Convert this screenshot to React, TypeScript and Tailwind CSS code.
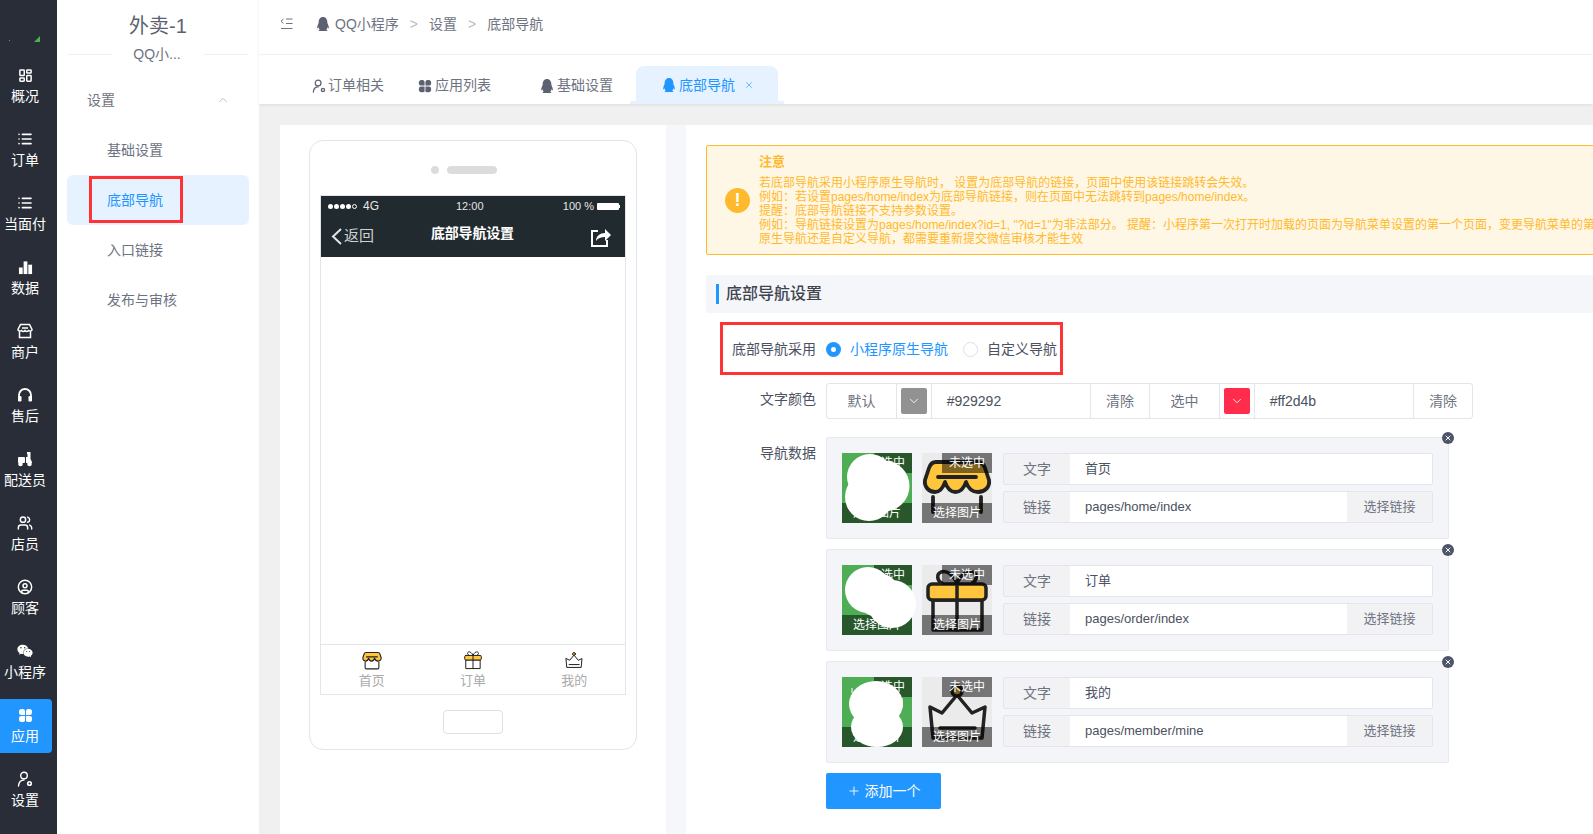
import { ChevronDown, ChevronUp, Plus, X, LayoutDashboard, List, CircleUser, Users } from "lucide-react";
import { FaQq, FaWeixin } from "react-icons/fa";
import type { ReactNode } from "react";

function Clover({ className = "" }: { className?: string }) {
  return (
    <svg viewBox="0 0 16 16" className={className} fill="currentColor">
      <path d="M4 1h1.500A2.500 2.500 0 0 1 7.500 3.500v4H3.500A2.500 2.500 0 0 1 1 5V4a3 3 0 0 1 3-3z" />
      <path d="M12 1h-1.500A2.500 2.500 0 0 0 8.500 3.500v4h4A2.500 2.500 0 0 0 15 5V4a3 3 0 0 0-3-3z" />
      <path d="M4 15h1.500a2 2 0 0 0 2-2.500v-4h-4A2.500 2.500 0 0 0 1 11v1a3 3 0 0 0 3 3z" />
      <path d="M12 15h-1.500a2 2 0 0 1-2-2.500v-4h4A2.500 2.500 0 0 1 15 11v1a3 3 0 0 1-3 3z" />
    </svg>
  );
}

function PersonGear({ className = "" }: { className?: string }) {
  return (
    <svg viewBox="0 0 16 16" className={className} fill="none" stroke="currentColor" strokeWidth="1.400">
      <circle cx="7" cy="4.500" r="3.300" />
      <path d="M1.500 15c.3-3.500 2.500-6 5.500-6" strokeLinecap="round" />
      <circle cx="12.500" cy="12.500" r="1.800" strokeWidth="1.600" />
    </svg>
  );
}

function Bars({ className = "" }: { className?: string }) {
  return (
    <svg viewBox="0 0 16 16" className={className} fill="currentColor">
      <rect x="1" y="8" width="4" height="7" />
      <rect x="6" y="1.500" width="4" height="13.500" />
      <rect x="11" y="5" width="4" height="10" />
    </svg>
  );
}

function Shop({ className = "" }: { className?: string }) {
  return (
    <svg viewBox="0 0 16 16" className={className} fill="none" stroke="currentColor" strokeWidth="1.500">
      <path d="M3.500 1.500h9L15 6.500c0 1.500-2 2.200-3.500 1-1 1.200-2.500 1.200-3.500 0-1 1.200-2.500 1.200-3.500 0C3 8.700 1 8 1 6.500z" />
      <path d="M2.500 9v5.500h11V9M5 5h6" />
    </svg>
  );
}

function Headset({ className = "" }: { className?: string }) {
  return (
    <svg viewBox="0 0 16 16" className={className} fill="none" stroke="currentColor" strokeWidth="1.800">
      <path d="M2 10V8a6 6 0 0 1 12 0v2" />
      <rect x="1" y="9" width="3.500" height="5.500" rx="1.200" fill="currentColor" stroke="none" />
      <rect x="11.500" y="9" width="3.500" height="5.500" rx="1.200" fill="currentColor" stroke="none" />
    </svg>
  );
}

function Scooter({ className = "" }: { className?: string }) {
  return (
    <svg viewBox="0 0 16 16" className={className} fill="currentColor">
      <rect x="1" y="6" width="7" height="6" rx="1" />
      <path d="M10 1h3.500v7l1.500 3v1H9V6h1.500V3H10z" />
      <circle cx="3.500" cy="13" r="2.300" />
      <circle cx="12.500" cy="13" r="2.300" />
    </svg>
  );
}

function FoldIcon() {
  return (
    <svg viewBox="0 0 14 14" className="h-[14px] w-[14px]" fill="none" stroke="#6b7280" strokeWidth="1">
      <path d="M3.500 2 1 4.200l2.500 2.200M6 2h6.500M6 6.500h6.500M1 11.500h11.500" />
    </svg>
  );
}

// the yellow tab icons, drawn on a 70 unit box so the same art works at 20px and 70px
function StoreArt({ size, closed = false }: { size: number; closed?: boolean }) {
  return (
    <svg viewBox="0 0 70 70" width={size} height={size} fill="none" stroke="#222" strokeWidth="3.800" strokeLinejoin="round" strokeLinecap="round">
      <path d="M14 9H56C60 9 62 12 63 15L67 27C68 34 63 39 56 39C50 39 46 35 44 29C42 35 39 39 33.500 39C28 39 25 35 23 29C21 35 18 39 13 39C7 39 2 34 3 27L7 15C8 12 10 9 14 9Z" fill="#ffc53d" />
      <path d="M16 24h38" />
      {closed ? <path d="M11 42V62Q11 66 15 66H55Q59 66 59 62V42" /> : <path d="M11 44v15M59 44v15" />}
    </svg>
  );
}

function GiftArt({ size }: { size: number }) {
  return (
    <svg viewBox="0 0 70 70" width={size} height={size} fill="none" stroke="#222" strokeWidth="3.500" strokeLinejoin="round" strokeLinecap="round">
      <path d="M35 18c-4-8-10-13-16-11-5 2-4 9 1 11M35 18c4-8 10-13 16-11 5 2 4 9-1 11" />
      <path d="M11 35h49v30H11z" />
      <rect x="6" y="19" width="58" height="16" rx="4" fill="#ffc53d" />
      <path d="M35 19v46" />
    </svg>
  );
}

function CrownArt({ size }: { size: number }) {
  return (
    <svg viewBox="0 0 70 70" width={size} height={size} fill="none" stroke="#222" strokeWidth="3.500" strokeLinejoin="round" strokeLinecap="round">
      <path d="M8 30 20 36 35 18l15 18 13-6-3 31H11z" />
      <path d="M18 51h35" />
      <circle cx="35" cy="14" r="5" fill="#ffc53d" />
    </svg>
  );
}

// white patches that were painted over the green thumbnails
function Patch({ children }: { children: ReactNode }) {
  return (
    <svg viewBox="0 0 70 70" className="absolute top-0 left-0 h-[70px] w-[70px] overflow-visible" fill="#fff">
      {children}
    </svg>
  );
}

const railItems = [
  { label: "概况", icon: <LayoutDashboard className="h-[15px] w-[15px]" strokeWidth={2.400} /> },
  { label: "订单", icon: <List className="h-[16px] w-[16px]" strokeWidth={2.400} /> },
  { label: "当面付", icon: <List className="h-[16px] w-[16px]" strokeWidth={2.400} /> },
  { label: "数据", icon: <Bars className="h-[15px] w-[15px]" /> },
  { label: "商户", icon: <Shop className="h-[16px] w-[16px]" /> },
  { label: "售后", icon: <Headset className="h-[16px] w-[16px]" /> },
  { label: "配送员", icon: <Scooter className="h-[16px] w-[16px]" /> },
  { label: "店员", icon: <Users className="h-[16px] w-[16px]" strokeWidth={2.200} /> },
  { label: "顾客", icon: <CircleUser className="h-[16px] w-[16px]" strokeWidth={2.200} /> },
  { label: "小程序", icon: <FaWeixin className="h-[16px] w-[16px]" /> },
  { label: "应用", icon: <Clover className="h-[15px] w-[15px]" />, active: true },
  { label: "设置", icon: <PersonGear className="h-[16px] w-[16px]" /> },
];

const navRows = [
  {
    text: "首页",
    link: "pages/home/index",
    art: <StoreArt size={70} />,
    patch: (
      <Patch>
        <circle cx="28" cy="24" r="23" />
        <circle cx="27" cy="44" r="24" />
        <circle cx="42" cy="33" r="25.500" />
      </Patch>
    ),
  },
  {
    text: "订单",
    link: "pages/order/index",
    art: <GiftArt size={70} />,
    patch: (
      <Patch>
        <circle cx="26" cy="25" r="23" />
        <circle cx="50" cy="39" r="24" />
        <circle cx="36" cy="30" r="22" />
      </Patch>
    ),
  },
  {
    text: "我的",
    link: "pages/member/mine",
    art: <CrownArt size={70} />,
    patch: (
      <Patch>
        <ellipse cx="34" cy="27" rx="27" ry="23" />
        <ellipse cx="35" cy="50" rx="26" ry="20" />
        <path d="M10 11v5M60 21v10" stroke="#fff" strokeWidth="1" fill="none" />
      </Patch>
    ),
  },
];

function Rail() {
  return (
    <aside className="flex w-[57px] shrink-0 flex-col bg-[#282d38] text-white">
      <div className="relative h-[54px]">
        <span className="absolute top-[40px] left-[9px] h-px w-px bg-[#4caf50]" />
        <span className="absolute top-[36px] left-[34px] h-0 w-0 border-b-[6px] border-l-[6px] border-b-[#4caf50] border-l-transparent" />
      </div>
      {railItems.map((item) => (
        <div key={item.label} className="flex h-[64px] items-center">
          <div
            className={`flex h-[54px] w-[52px] flex-col items-center justify-center rounded-r-[4px] pr-[2px] ${
              item.active ? "bg-[#2196ff]" : ""
            }`}
          >
            <span className="flex h-[18px] items-center">{item.icon}</span>
            <span className="mt-[2px] text-[14px] leading-[20px] whitespace-nowrap">{item.label}</span>
          </div>
        </div>
      ))}
    </aside>
  );
}

function SubMenu() {
  return (
    <aside className="w-[202px] shrink-0 bg-white text-[14px] text-[#6e7382]">
      <div className="pt-[12px] text-center text-[20px] leading-[28px] text-[#5c6270]">外卖-1</div>
      <div className="mx-[10px] mt-[4px] flex h-[20px] items-center">
        <span className="h-px flex-1 bg-[#f1f1f3]" />
        <span className="w-[90px] pr-[2px] text-center leading-[20px]">QQ小...</span>
        <span className="h-px flex-1 bg-[#f1f1f3]" />
      </div>
      <div className="mt-[21px] flex h-[30px] items-center justify-between pr-[29px] pl-[30px]">
        <span>设置</span>
        <ChevronUp className="h-[14px] w-[14px] text-[#9aa0ac]" strokeWidth={1.200} />
      </div>
      <ul className="mx-[10px] mt-[10px]">
        <li className="flex h-[50px] items-center pl-[40px]">基础设置</li>
        <li className="relative flex h-[50px] items-center rounded-[6px] bg-[#e6f2ff] pl-[40px] text-[#2196ff]">
          底部导航
          <span className="absolute top-[1px] left-[22px] h-[47px] w-[94px] border-[3px] border-[#ff3333]" />
        </li>
        <li className="flex h-[50px] items-center pl-[40px]">入口链接</li>
        <li className="flex h-[50px] items-center pl-[40px]">发布与审核</li>
      </ul>
    </aside>
  );
}

function TopBars() {
  return (
    <div className="relative z-10 bg-white text-[14px] text-[#6e7382] shadow-[0_1px_3px_rgba(0,0,0,0.08)]">
      <div className="flex h-[55px] items-center border-b border-[#f2f2f4] pb-[6px] pl-[21px]">
        <FoldIcon />
        <FaQq className="ml-[22px] h-[14px] w-[14px] text-[#5c6270]" />
        <span className="ml-[5px]">QQ小程序</span>
        <span className="mx-[11px] text-[#b9bcc6]">&gt;</span>
        <span>设置</span>
        <span className="mx-[11px] text-[#b9bcc6]">&gt;</span>
        <span>底部导航</span>
      </div>
      <div className="flex h-[49px] items-end">
        <div className="mb-[8px] ml-[53px] flex items-center gap-[2px]">
          <PersonGear className="h-[14px] w-[14px] text-[#5c6270]" />
          <span>订单相关</span>
        </div>
        <div className="mb-[8px] ml-[34px] flex items-center gap-[3px]">
          <Clover className="h-[14px] w-[14px] text-[#5c6270]" />
          <span>应用列表</span>
        </div>
        <div className="mb-[8px] ml-[49px] flex items-center gap-[3px]">
          <FaQq className="h-[14px] w-[14px] text-[#5c6270]" />
          <span>基础设置</span>
        </div>
        <div className="relative ml-[23px] flex h-[38px] w-[142px] items-center rounded-t-[8px] bg-[#e6f2ff] pl-[26px] text-[#2196ff]">
          <span className="absolute bottom-0 -left-[6px] h-[3px] w-[6px] bg-[#e6f2ff]" />
          <span className="absolute -right-[6px] bottom-0 h-[3px] w-[6px] bg-[#e6f2ff]" />
          <FaQq className="h-[14px] w-[14px]" />
          <span className="ml-[3px]">底部导航</span>
          <X className="ml-[9px] h-[10px] w-[10px]" strokeWidth={1.500} />
        </div>
      </div>
    </div>
  );
}

function PhonePreview() {
  return (
    <section className="w-[386px] shrink-0 bg-white pt-[15px] pl-[29px]">
      <div className="flex h-[610px] w-[328px] flex-col items-center rounded-[14px] border border-[#e3e4ec]">
        <div className="mt-[25px] mr-[18px] flex h-[8px] items-center gap-[8px]">
          <span className="h-[8px] w-[8px] rounded-full bg-[#dcdcdc]" />
          <span className="h-[8px] w-[50px] rounded-full bg-[#dcdcdc]" />
        </div>
        <div className="mt-[21px] flex h-[500px] w-[306px] flex-col border border-[#e3e4ec]">
          <div className="h-[61px] bg-[#212a2e] text-white">
            <div className="relative flex h-[20px] items-center justify-between pr-[5px] pl-[7px] text-[11px] text-[#e5e5e5]">
              <span className="flex items-center gap-[1px]">
                <span className="h-[5px] w-[5px] rounded-full bg-white" />
                <span className="h-[5px] w-[5px] rounded-full bg-white" />
                <span className="h-[5px] w-[5px] rounded-full bg-white" />
                <span className="h-[5px] w-[5px] rounded-full bg-white" />
                <span className="h-[5px] w-[5px] rounded-full border border-white" />
                <span className="ml-[5px] text-[12px]">4G</span>
              </span>
              <span className="absolute left-[135px]">12:00</span>
              <span className="flex items-center gap-[3px]">
                100 %
                <span className="h-[7px] w-[22px] rounded-[1px] bg-white" />
                <span className="-ml-[3px] h-[3px] w-[1px] bg-white" />
              </span>
            </div>
            <div className="relative flex h-[41px] items-center justify-between pr-[13px] pl-[10px]">
              <span className="flex items-center text-[15px] text-[#cfd2d3]">
                <svg viewBox="0 0 11 17" className="h-[17px] w-[11px]" fill="none" stroke="#e5e5e5" strokeWidth="2">
                  <path d="M10 1 2 8.500l8 7.500" />
                </svg>
                <span className="ml-[2px]">返回</span>
              </span>
              <span className="absolute left-[110px] -mt-[6px] text-[14px] font-bold tracking-[-0.2px]">底部导航设置</span>
              <svg viewBox="0 0 22 20" className="h-[20px] w-[22px]" fill="none" stroke="#fff" strokeWidth="2">
                <path d="M8 4H2v15h15v-6" />
                <path d="M6 14c0-5 4-8 9-8V2l6 6-6 6V10c-4 0-7 1-9 4z" fill="#fff" stroke="none" />
              </svg>
            </div>
          </div>
          <div className="flex-1" />
          <div className="flex h-[50px] border-t border-[#e3e4ec] pt-[5px] text-[13px] text-[#aaaaaa]">
            {[
              { label: "首页", art: <StoreArt size={20} closed /> },
              { label: "订单", art: <GiftArt size={20} /> },
              { label: "我的", art: <CrownArt size={20} /> },
            ].map((tab) => (
              <div key={tab.label} className="flex flex-1 flex-col items-center">
                {tab.art}
                <span className="leading-[22px]">{tab.label}</span>
              </div>
            ))}
          </div>
        </div>
        <div className="mt-[15px] h-[24px] w-[60px] rounded-[4px] border border-[#dfdfe4]" />
      </div>
    </section>
  );
}

function Alert() {
  return (
    <div className="flex h-[110px] w-[1000px] items-center rounded-[2px] border border-[#ffb92c] bg-[#fff7e6] pl-[18px] text-[12px] leading-[14px] whitespace-nowrap text-[#ffb92c]">
      <span className="flex h-[25px] w-[25px] shrink-0 items-center justify-center rounded-full bg-[#ffb92c] text-[18px] font-bold text-white">!</span>
      <div className="ml-[9px]">
        <p className="mb-[7px] text-[13px] font-bold">注意</p>
        <p>若底部导航采用小程序原生导航时， 设置为底部导航的链接，页面中使用该链接跳转会失效。</p>
        <p>例如：若设置pages/home/index为底部导航链接，则在页面中无法跳转到pages/home/index。</p>
        <p>提醒：底部导航链接不支持参数设置。</p>
        <p>例如：导航链接设置为pages/home/index?id=1, "?id=1"为非法部分。 提醒：小程序第一次打开时加载的页面为导航菜单设置的第一个页面，变更导航菜单的第一个页面后，无论是</p>
        <p>原生导航还是自定义导航，都需要重新提交微信审核才能生效</p>
      </div>
    </div>
  );
}

function ColorGroup({ name, value, swatch }: { name: string; value: string; swatch: string }) {
  return (
    <>
      <span className="flex w-[69px] items-center justify-center text-[#6e7382]">{name}</span>
      <span className="flex w-[35px] items-center justify-center border-l border-[#e3e4ec]">
        <span className="flex h-[26px] w-[26px] items-center justify-center rounded-[2px] text-white" style={{ backgroundColor: swatch }}>
          <ChevronDown className="h-[14px] w-[14px]" strokeWidth={1.500} />
        </span>
      </span>
      <span className="flex w-[160px] items-center border-l border-[#e3e4ec] pl-[15px] text-[#4b5162]">{value}</span>
      <span className="flex w-[59px] items-center justify-center border-l border-[#e3e4ec] text-[#6e7382]">清除</span>
    </>
  );
}

function NavRow({ row }: { row: (typeof navRows)[number] }) {
  return (
    <div className="relative flex h-[102px] w-[623px] items-center gap-[10px] rounded-[2px] border border-[#e8eaef] bg-[#f4f5f8] pl-[15px]">
      <span className="absolute -top-[6px] -right-[6px] flex h-[12px] w-[12px] items-center justify-center rounded-full bg-[#4e5568] text-white">
        <X className="h-[8px] w-[8px]" strokeWidth={3} />
      </span>
      <div className="relative h-[70px] w-[70px] shrink-0 bg-[#4fae55] text-[12px] text-white">
        <span className="absolute top-0 right-0 flex h-[20px] w-[38px] items-center justify-center bg-black/50">选中</span>
        <span className="absolute bottom-0 left-0 flex h-[20px] w-full items-center justify-center bg-black/50">选择图片</span>
        {row.patch}
      </div>
      <div className="relative h-[70px] w-[70px] shrink-0 overflow-hidden bg-[#ebebeb] text-[12px] text-white">
        {row.art}
        <span className="absolute top-0 right-0 flex h-[20px] w-[50px] items-center justify-center bg-black/50">未选中</span>
        <span className="absolute bottom-0 left-0 flex h-[20px] w-full items-center justify-center bg-black/50">选择图片</span>
      </div>
      <div className="ml-[1px] flex w-[430px] flex-col gap-[6px] text-[13px]">
        <div className="flex h-[32px] rounded-[2px] border border-[#e3e4ec] bg-white">
          <span className="flex w-[66px] items-center justify-center bg-[#f2f2f4] text-[14px] text-[#6e7382]">文字</span>
          <span className="flex flex-1 items-center pl-[15px] text-[#4b5162]">{row.text}</span>
        </div>
        <div className="flex h-[32px] rounded-[2px] border border-[#e3e4ec] bg-white">
          <span className="flex w-[66px] items-center justify-center bg-[#f2f2f4] text-[14px] text-[#6e7382]">链接</span>
          <span className="flex flex-1 items-center pl-[15px] text-[#4b5162]">{row.link}</span>
          <span className="flex w-[85px] items-center justify-center bg-[#f2f2f4] text-[#6e7382]">选择链接</span>
        </div>
      </div>
    </div>
  );
}

function SettingsForm() {
  return (
    <section className="min-w-0 flex-1 overflow-hidden bg-white pt-[20px] pl-[20px]">
      <Alert />
      <div className="mt-[20px] flex h-[38px] items-center bg-[#f5f6fa] pl-[10px]">
        <span className="h-[20px] w-[3px] bg-[#2196ff]" />
        <span className="ml-[7px] text-[16px] font-medium text-[#40444f]">底部导航设置</span>
      </div>
      <div className="mt-[9px] ml-[14px] flex h-[53px] w-[343px] items-center border-[3px] border-[#ff3333] pt-[1px] pl-[9px] text-[14px] whitespace-nowrap text-[#4b5162]">
        <span className="w-[84px]">底部导航采用</span>
        <span className="ml-[10px] flex h-[15px] w-[15px] items-center justify-center rounded-full bg-[#2196ff]">
          <span className="h-[5px] w-[5px] rounded-full bg-white" />
        </span>
        <span className="ml-[9px] text-[#2196ff]">小程序原生导航</span>
        <span className="ml-[15px] h-[15px] w-[15px] rounded-full border border-[#dcdfe6]" />
        <span className="ml-[9px]">自定义导航</span>
      </div>
      <div className="mt-[8px] flex text-[14px]">
        <span className="w-[110px] pt-[6px] text-right leading-[20px] text-[#4b5162]">文字颜色</span>
        <div className="ml-[10px] flex h-[36px] w-[647px] rounded-[3px] border border-[#e3e4ec]">
          <ColorGroup name="默认" value="#929292" swatch="#929292" />
          <span className="w-0 border-l border-[#e3e4ec]" />
          <ColorGroup name="选中" value="#ff2d4b" swatch="#ff2d4b" />
        </div>
      </div>
      <div className="mt-[18px] flex text-[14px]">
        <span className="w-[110px] pt-[6px] text-right leading-[20px] text-[#4b5162]">导航数据</span>
        <div className="ml-[10px] flex flex-col gap-[10px]">
          {navRows.map((row) => (
            <NavRow key={row.text} row={row} />
          ))}
          <button className="flex h-[36px] w-[115px] items-center justify-center gap-[4px] rounded-[2px] bg-[#2196ff] text-white">
            <Plus className="h-[14px] w-[14px]" strokeWidth={1.500} />
            添加一个
          </button>
        </div>
      </div>
    </section>
  );
}

export default function App() {
  return (
    <div className="flex h-[834px] w-[1593px] overflow-hidden bg-[#f0f0f0] font-['Liberation_Sans','Noto_Sans_CJK_SC',sans-serif]">
      <Rail />
      <SubMenu />
      <main className="flex min-w-0 flex-1 flex-col">
        <TopBars />
        <div className="mt-[21px] ml-[21px] flex min-h-0 flex-1 gap-[20px] bg-[#f5f7fa]">
          <PhonePreview />
          <SettingsForm />
        </div>
      </main>
    </div>
  );
}
